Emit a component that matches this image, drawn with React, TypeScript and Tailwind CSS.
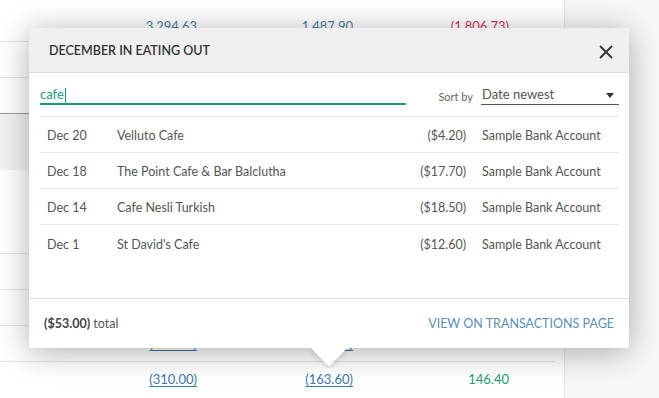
import React from "react";

const rows = [
  { date: "Dec 20", name: "Velluto Cafe", amount: "($4.20)", account: "Sample Bank Account" },
  { date: "Dec 18", name: "The Point Cafe & Bar Balclutha", amount: "($17.70)", account: "Sample Bank Account" },
  { date: "Dec 14", name: "Cafe Nesli Turkish", amount: "($18.50)", account: "Sample Bank Account" },
  { date: "Dec 1", name: "St David's Cafe", amount: "($12.60)", account: "Sample Bank Account" },
];

function NumRow({ a, b, c, cClass, link, h, extra }: { a: string; b: string; c: string; cClass: string; link?: boolean; h: string; extra?: string }) {
  const linkCls = link ? "text-[#3f78a6] underline underline-offset-2" : "text-[#4a7ea6]";
  return (
    <div className={`flex items-center border-b border-[#e4e4e4] text-[13px] ${h} ${extra ?? ""}`}>
      <div className="w-[197px] text-right">
        <span className={linkCls}>{a}</span>
      </div>
      <div className="w-[156px] text-right">
        <span className={linkCls}>{b}</span>
      </div>
      <div className={`w-[156px] text-right ${cClass}`}>{c}</div>
    </div>
  );
}

export default function App() {
  return (
    <div className="relative w-[659px] h-[398px] overflow-hidden bg-white" style={{ fontFamily: "Lato, 'Open Sans', sans-serif" }}>
      <div className="flex h-full">
        <div className="w-[565px] border-r border-[#e6e6e6] pr-[10px] flex flex-col">
          <div className="flex items-start pt-[17px] h-[42px] border-b border-[#e4e4e4] text-[13px]">
            <div className="w-[197px] text-right text-[#4a7ea6]">3,294.63</div>
            <div className="w-[156px] text-right text-[#4a7ea6]">1,487.90</div>
            <div className="w-[156px] text-right text-[#c8385a]">(1,806.73)</div>
          </div>
          <div className="h-[36px] border-b border-[#e4e4e4]" />
          <div className="h-[36px] border-b border-[#9a9a9a]" />
          <div className="h-[56px] bg-[#f2f2f2]" />
          <div className="h-[84px] border-b border-[#e4e4e4]" />
          <div className="h-[36px] border-b border-[#e4e4e4]" />
          <div className="h-[36px] border-b border-[#e4e4e4]" />
          <NumRow a="(330.00)" b="(60.00)" c="270.00" cClass="text-[#1f9e72]" link h="h-[36px]" />
          <NumRow a="(310.00)" b="(163.60)" c="146.40" cClass="text-[#1f9e72]" link h="h-[36px]" extra="border-b-0" />
        </div>
        <div className="flex-1 bg-[#f7f7f7]" />
      </div>

      {/* Popover */}
      <div className="absolute left-[29px] top-[28px] w-[600px] h-[320px] bg-white rounded-[3px] shadow-[0_4px_32px_rgba(0,0,0,0.32)] flex flex-col">
        <div className="h-[45px] shrink-0 bg-[#efefef] border-b border-[#dcdcdc] rounded-t-[3px] flex items-center justify-between pl-[20px] pr-[16px] pt-[3px]">
          <div className="text-[12.5px] font-semibold text-[#333]">DECEMBER IN EATING OUT</div>
          <svg width="14" height="14" viewBox="0 0 14 14" className="text-[#333]">
            <path d="M1.5 1.5 L12.5 12.5 M12.5 1.5 L1.5 12.5" stroke="currentColor" strokeWidth="1.8" strokeLinecap="round" />
          </svg>
        </div>
        <div className="flex-1 pl-[11px] pr-[10px] flex flex-col">
          <div className="flex items-end h-[44px] border-b border-[#e8e8e8] pb-[11px]">
            <div className="w-[366px] h-[20px] border-b-2 border-[#1a9c7c] flex items-center pt-[2px]">
              <span className="text-[13px] text-[#1a9c7c]">cafe</span>
              <span className="w-px h-[15px] bg-[#1a9c7c] ml-px" />
            </div>
            <div className="ml-auto flex items-end">
              <span className="text-[11px] text-[#666] mr-[8px]">Sort by</span>
              <div className="w-[138px] h-[20px] border-b border-[#555] flex items-center justify-between pl-px pr-[5px] pt-[1px]">
                <span className="text-[13px] text-[#555]">Date newest</span>
                <svg width="8" height="5" viewBox="0 0 8 5"><path d="M0 0 L8 0 L4 5 Z" fill="#333" /></svg>
              </div>
            </div>
          </div>
          {rows.map((r, i) => (
            <div key={i} className={`flex items-center h-[36px] pt-[4px] text-[12.5px] text-[#555] whitespace-nowrap ${i < rows.length - 1 ? "border-b border-[#e8e8e8]" : ""}`}>
              <div className="w-[77px] pl-[7px]">{r.date}</div>
              <div className="flex-1">{r.name}</div>
              <div className="w-[96px] pr-[16px] text-right">{r.amount}</div>
              <div className="w-[137px]">{r.account}</div>
            </div>
          ))}
        </div>
        <div className="h-[50px] shrink-0 border-t border-[#dedede] flex items-center justify-between pl-[15px] pr-[15px] pt-[2px] text-[12.5px]">
          <div className="text-[#555]">
            <span className="font-bold text-[#444]">($53.00)</span> total
          </div>
          <div className="text-[#5d8fb3]">VIEW ON TRANSACTIONS PAGE</div>
        </div>
        <div className="absolute left-[278px] top-[320px] w-[44px] h-[20px] overflow-hidden">
          <div className="absolute left-[9px] top-[-13px] w-[26px] h-[26px] bg-white rotate-45 shadow-[2px_2px_5px_rgba(0,0,0,0.12)]" />
        </div>
      </div>
    </div>
  );
}
